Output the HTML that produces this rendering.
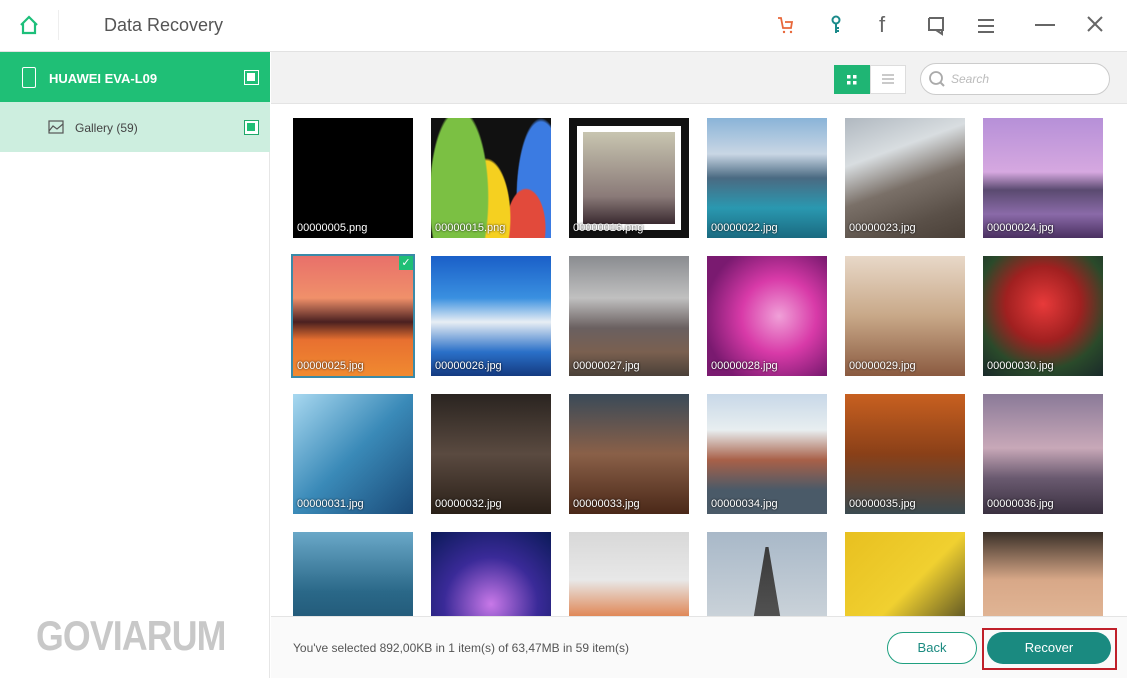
<!DOCTYPE html>
<html><head><meta charset="utf-8"><style>
*{margin:0;padding:0;box-sizing:border-box}
body{width:1127px;height:678px;overflow:hidden;background:#fff;font-family:"Liberation Sans",sans-serif;position:relative}
.hdr{position:absolute;left:0;top:0;width:1127px;height:52px;background:#fff;border-bottom:1px solid #e2e2e2}
.side{position:absolute;left:0;top:52px;width:270px;height:626px;background:#fff;border-right:1px solid #e6e6e6}
.tb{position:absolute;left:271px;top:52px;width:856px;height:52px;background:#f2f2f2;border-bottom:1px solid #e4e4e4}
.ft{position:absolute;left:271px;top:616px;width:856px;height:62px;background:#fafafa;border-top:1px solid #e4e4e4}
.t{position:absolute;width:120px;height:120px;overflow:hidden}
.t span{position:absolute;left:4px;bottom:4px;color:#fff;font-size:11px;text-shadow:0 0 2px #000}
</style></head><body>
<div class="hdr">
<svg style="position:absolute;left:19px;top:15px" width="20" height="20" viewBox="0 0 20 20"><path d="M2 10 L10 2 L18 10 M4 8 V18 H16 V8" fill="none" stroke="#1dbf7a" stroke-width="2.2"/></svg>
<div style="position:absolute;left:58px;top:10px;width:1px;height:30px;background:#eee"></div>
<div style="position:absolute;left:104px;top:15px;font-size:18px;color:#555">Data Recovery</div>
<svg style="position:absolute;left:776px;top:15px" width="20" height="20" viewBox="0 0 20 20"><path d="M2 3 H5 L7 13 H15 L16 7 H9" fill="none" stroke="#e8673a" stroke-width="1.8"/><circle cx="8" cy="17" r="1.2" fill="#e8673a"/><circle cx="15" cy="17" r="1.2" fill="#e8673a"/></svg>
<svg style="position:absolute;left:826px;top:14px" width="20" height="22" viewBox="0 0 20 22"><circle cx="10" cy="6" r="3.5" fill="none" stroke="#1a8a8a" stroke-width="2"/><path d="M10 9.5 V19 M10 14 H13 M10 17 H13" stroke="#1a8a8a" stroke-width="2"/></svg>
<div style="position:absolute;left:879px;top:12px;font-size:22px;color:#666">f</div>
<svg style="position:absolute;left:926px;top:15px" width="20" height="22" viewBox="0 0 20 22"><path d="M3 3 H17 V15 H10 L16 19 V15" fill="none" stroke="#666" stroke-width="2"/><path d="M3 3 V15 H10" fill="none" stroke="#666" stroke-width="2"/></svg>
<svg style="position:absolute;left:976px;top:17px" width="20" height="18"><path d="M2 3H18M2 9H18M2 15H18" stroke="#666" stroke-width="2"/></svg>
<div style="position:absolute;left:1035px;top:24px;width:20px;height:2px;background:#666"></div>
<svg style="position:absolute;left:1086px;top:15px" width="18" height="18"><path d="M2 2L16 16M16 2L2 16" stroke="#666" stroke-width="2"/></svg>
</div>
<div class="side">
<div style="position:absolute;left:0;top:0;width:270px;height:50px;background:#1fbf76"></div>
<div style="position:absolute;left:22px;top:15px;width:14px;height:21px;border:1.5px solid #fff;border-radius:2px"></div>
<div style="position:absolute;left:49px;top:19px;font-size:13px;color:#fff;font-weight:bold">HUAWEI EVA-L09</div>
<div style="position:absolute;left:244px;top:18px;width:15px;height:15px;border:1.5px solid #fff"><div style="margin:2px;width:8px;height:8px;background:#fff"></div></div>
<div style="position:absolute;left:0;top:50px;width:270px;height:50px;background:#cdeedf"></div>
<svg style="position:absolute;left:48px;top:68px" width="16" height="14"><rect x="1" y="1" width="14" height="12" fill="none" stroke="#555" stroke-width="1.2"/><path d="M1 11 L5 6 L9 9 L15 4" fill="none" stroke="#555" stroke-width="1.2"/></svg>
<div style="position:absolute;left:75px;top:69px;font-size:12px;color:#444">Gallery (59)</div>
<div style="position:absolute;left:244px;top:68px;width:15px;height:15px;border:1.5px solid #1fa86a;background:#fff"><div style="margin:2px;width:8px;height:8px;background:#1fbf76"></div></div>
<div style="position:absolute;left:36px;top:560px;font-size:42px;font-weight:bold;color:#c8c8c8;letter-spacing:-1px;transform:scaleX(.85);transform-origin:left">GOVIARUM</div>
</div>
<div class="tb">
<div style="position:absolute;left:563px;top:13px;width:36px;height:29px;background:#1fb574"></div>
<svg style="position:absolute;left:575px;top:22px" width="12" height="12"><rect x="1" y="1" width="3.5" height="3.5" fill="#fff"/><rect x="7" y="1" width="3.5" height="3.5" fill="#fff"/><rect x="1" y="7" width="3.5" height="3.5" fill="#fff"/><rect x="7" y="7" width="3.5" height="3.5" fill="#fff"/></svg>
<div style="position:absolute;left:599px;top:13px;width:36px;height:29px;background:#fff;border:1px solid #ddd"></div>
<svg style="position:absolute;left:610px;top:20px" width="14" height="14"><path d="M1 3H13M1 7H13M1 11H13" stroke="#aaa" stroke-width="1.3"/></svg>
<div style="position:absolute;left:649px;top:11px;width:190px;height:32px;background:#fff;border:1px solid #ccc;border-radius:16px"></div>
<svg style="position:absolute;left:656px;top:17px" width="20" height="20"><circle cx="9" cy="9" r="6" fill="none" stroke="#aaa" stroke-width="1.8"/><path d="M13 13L17 17" stroke="#aaa" stroke-width="2"/></svg>
<div style="position:absolute;left:680px;top:20px;font-size:12px;color:#bbb;font-style:italic">Search</div>
</div>
<div style="position:absolute;left:271px;top:105px;width:856px;height:511px;background:#fff;overflow:hidden">
<div class="t" style="left:22px;top:13px;background:#000"><span>00000005.png</span></div>
<div class="t" style="left:160px;top:13px;background:radial-gradient(ellipse 30px 90px at 28px 80px,#7bc043 95%,transparent 100%),radial-gradient(ellipse 25px 60px at 55px 100px,#f5d020 95%,transparent 100%),radial-gradient(ellipse 20px 40px at 95px 110px,#e24a3b 95%,transparent 100%),radial-gradient(ellipse 25px 80px at 110px 80px,#3b7be2 95%,transparent 100%),#111"><span>00000015.png</span></div>
<div class="t" style="left:298px;top:13px;background:#111"><div style="position:absolute;left:8px;top:8px;width:104px;height:104px;background:#fff;padding:6px"><div style="width:92px;height:92px;background:linear-gradient(#c8c5b0,#8a7a78 70%,#3a2a30)"></div></div><span>00000016.png</span></div>
<div class="t" style="left:436px;top:13px;background:linear-gradient(#8ab4d8,#c9d6e4 30%,#4a6a82 50%,#2a98b0 75%,#1a6a80)"><span>00000022.jpg</span></div>
<div class="t" style="left:574px;top:13px;background:linear-gradient(160deg,#b0b8c0,#d8dde0 30%,#7a7068 55%,#5a5048 80%,#4a4038)"><span>00000023.jpg</span></div>
<div class="t" style="left:712px;top:13px;background:linear-gradient(#b690d8,#d6a8e0 45%,#5a4a70 60%,#8a6aa8 80%,#4a3060)"><span>00000024.jpg</span></div>
<div class="t" style="left:22px;top:151px;outline:2px solid #3a8aa8;background:linear-gradient(#e8706a,#f0906a 35%,#4a2020 55%,#e87030 70%,#f08a30)"><div style="position:absolute;right:0;top:0;width:14px;height:14px;background:#1fbf76;color:#fff;font-size:11px;text-align:center;line-height:14px">✓</div><span>00000025.jpg</span></div>
<div class="t" style="left:160px;top:151px;background:linear-gradient(#1a5fc8,#3a90e0 35%,#e8eef4 55%,#2a70c8 80%,#143a80)"><span>00000026.jpg</span></div>
<div class="t" style="left:298px;top:151px;background:linear-gradient(#8a8c90,#c0c0c0 35%,#6a6060 60%,#7a6050 80%,#4a4038)"><span>00000027.jpg</span></div>
<div class="t" style="left:436px;top:151px;background:radial-gradient(circle at 60% 50%,#f0a0d8,#d83aa8 40%,#7a1a70 80%)"><span>00000028.jpg</span></div>
<div class="t" style="left:574px;top:151px;background:linear-gradient(#e8d8c8,#c8a888 50%,#8a5a40)"><span>00000029.jpg</span></div>
<div class="t" style="left:712px;top:151px;background:radial-gradient(circle at 50% 40%,#e83a3a,#a02020 40%,#2a4a2a 70%,#1a2a2a)"><span>00000030.jpg</span></div>
<div class="t" style="left:22px;top:289px;background:linear-gradient(135deg,#a8d8f0,#3a8ab8 50%,#1a4a78)"><span>00000031.jpg</span></div>
<div class="t" style="left:160px;top:289px;background:linear-gradient(#2a2420,#5a4a40 50%,#2a2018)"><span>00000032.jpg</span></div>
<div class="t" style="left:298px;top:289px;background:linear-gradient(#3a4a58,#8a6048 50%,#4a2818)"><span>00000033.jpg</span></div>
<div class="t" style="left:436px;top:289px;background:linear-gradient(#c8d8e8,#e8eef0 30%,#a86048 55%,#4a5a68 80%)"><span>00000034.jpg</span></div>
<div class="t" style="left:574px;top:289px;background:linear-gradient(#c86020,#8a4018 50%,#3a4a50)"><span>00000035.jpg</span></div>
<div class="t" style="left:712px;top:289px;background:linear-gradient(#8a7a98,#c8a8b8 45%,#6a5a70 70%,#3a3040)"><span>00000036.jpg</span></div>
<div class="t" style="left:22px;top:427px;background:linear-gradient(#6aa8c8,#2a6888 50%,#1a4a68)"></div>
<div class="t" style="left:160px;top:427px;background:radial-gradient(circle at 50% 60%,#c878e8,#3a2a98 50%,#0a1a58)"></div>
<div class="t" style="left:298px;top:427px;background:linear-gradient(#d8d8d8,#e8e8e8 40%,#e08858 70%,#c8c8c8)"></div>
<div class="t" style="left:436px;top:427px;background:linear-gradient(#a8b8c8,#d8dde0)"><div style="position:absolute;left:45px;top:15px;width:30px;height:80px;background:linear-gradient(#3a3a3a,#555);clip-path:polygon(45% 0,55% 0,100% 100%,0 100%)"></div></div>
<div class="t" style="left:574px;top:427px;background:linear-gradient(135deg,#e8c020,#f0d030 50%,#2a2a20)"></div>
<div class="t" style="left:712px;top:427px;background:linear-gradient(#3a3028,#d8a888 40%,#e8c0a0)"></div>
</div>
<div class="ft">
<div style="position:absolute;left:22px;top:24px;font-size:12px;color:#555">You've selected 892,00KB in 1 item(s) of 63,47MB in 59 item(s)</div>
<div style="position:absolute;left:616px;top:15px;width:90px;height:32px;border:1px solid #1fa080;border-radius:16px;background:#fff;color:#1a8a80;font-size:13px;text-align:center;line-height:30px">Back</div>
<div style="position:absolute;left:711px;top:11px;width:135px;height:42px;border:2px solid #c0202a"></div>
<div style="position:absolute;left:716px;top:15px;width:124px;height:32px;border-radius:16px;background:#1a8a80;color:#fff;font-size:13px;text-align:center;line-height:32px">Recover</div>
</div>
</body></html>
